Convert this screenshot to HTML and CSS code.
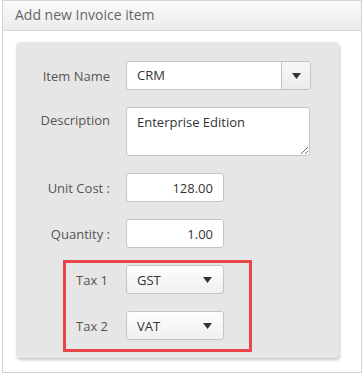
FILE: index.html
```html
<!DOCTYPE html>
<html lang="en">
<head>
  <meta charset="UTF-8" />
  <title>Add new Invoice item</title>
  <link rel="stylesheet" href="styles.css">
</head>
<body>
  <div class="panel">
    <div class="panel-header">Add new Invoice item</div>
    <div class="panel-body">
      <div class="card">
        <!-- Item -->
        <div class="row">
          <label class="label">Item Name</label>
          <div class="combo">
            <span class="combo-text">CRM</span>
            <span class="combo-btn">
              <svg width="9" height="6" viewBox="0 0 9 6"><path d="M0 0h9L4.5 6z" fill="#333"/></svg>
            </span>
          </div>
        </div>
        <div class="row row-top">
          <label class="label">Description</label>
          <textarea class="textarea">Enterprise Edition</textarea>
        </div>
        <div class="row">
          <label class="label">Unit Cost :</label>
          <input class="num" type="text" value="128.00" />
        </div>
        <div class="row">
          <label class="label">Quantity :</label>
          <input class="num" type="text" value="1.00" />
        </div>

        <!-- Taxes -->
        <div class="tax-box">
          <div class="row">
            <label class="label">Tax 1</label>
            <div class="select">
              <span>GST</span>
              <svg width="9" height="6" viewBox="0 0 9 6"><path d="M0 0h9L4.5 6z" fill="#333"/></svg>
            </div>
          </div>
          <div class="row">
            <label class="label">Tax 2</label>
            <div class="select">
              <span>VAT</span>
              <svg width="9" height="6" viewBox="0 0 9 6"><path d="M0 0h9L4.5 6z" fill="#333"/></svg>
            </div>
          </div>
        </div>
      </div>
    </div>
  </div>
</body>
</html>
```

FILE: styles.css
```css
* {
  box-sizing: border-box;
}

body {
  margin: 0;
  background: #fff;
  font-family: "Open Sans", sans-serif;
  font-size: 13px;
  color: #333;
}

.panel {
  margin: 0 1px 0 2px;
  border: 1px solid #d3d3d3;
  background: #fff;
}

.panel-header {
  height: 30px;
  padding: 0 12px;
  line-height: 28px;
  font-size: 14px;
  color: #666;
  background: linear-gradient(#fafafa, #ececec);
  border-bottom: 1px solid #d6d6d6;
}

.panel-body {
  padding: 11px 0 14px 13px;
}

.card {
  width: 323px;
  padding: 19px 0 6px 0;
  background: #e6e6e6;
  border-radius: 4px;
  box-shadow: 1px 2px 3px rgba(0, 0, 0, 0.22);
}

.row {
  display: flex;
  align-items: center;
  margin-bottom: 17px;
}

.row-top {
  align-items: flex-start;
}

.label {
  width: 94px;
  margin-right: 16px;
  text-align: right;
  color: #555;
}

.row-top .label {
  padding-top: 4px;
}

.combo {
  display: flex;
  width: 185px;
  height: 29px;
  background: #fff;
  border: 1px solid #c4c4c4;
  border-radius: 3px;
  overflow: hidden;
}

.combo-text {
  flex: 1;
  padding-left: 10px;
  line-height: 27px;
}

.combo-btn {
  width: 29px;
  display: flex;
  align-items: center;
  justify-content: center;
  border-left: 1px solid #c4c4c4;
  background: linear-gradient(#f7f7f7, #ebebeb);
}

.textarea {
  width: 184px;
  height: 49px;
  padding: 5px 10px;
  font-family: inherit;
  font-size: 13px;
  color: #333;
  border: 1px solid #c4c4c4;
  border-radius: 3px;
  outline: none;
}

input, .select {
  width: 98px;
  height: 29px;
  font-family: inherit;
  font-size: 13px;
  color: #333;
  border: 1px solid #c4c4c4;
  border-radius: 3px;
}

.num {
  padding: 0 10px;
  text-align: right;
  background: #fff;
  outline: none;
}

.select {
  display: flex;
  align-items: center;
  justify-content: space-between;
  padding: 0 11px 0 10px;
  background: linear-gradient(#fdfdfd, #f0f0f0);
}

.tax-box {
  width: 189px;
  margin: -5px 0 0 47px;
  padding: 2px 0 9px 0;
  border: 3px solid #e9464a;
}

.tax-box .row:last-child {
  margin-bottom: 0;
}

.tax-box .label {
  width: 42px;
  margin-right: 18px;
}
```
